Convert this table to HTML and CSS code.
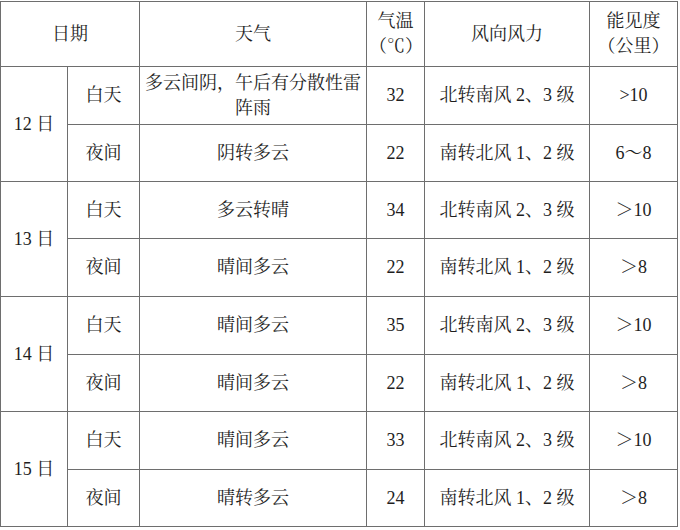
FILE: index.html
```html
<!DOCTYPE html>
<html lang="zh-CN">
<head>
<meta charset="utf-8">
<title>天气预报</title>
<link rel="stylesheet" href="styles.css">
</head>
<body>
<table class="wx">
  <colgroup>
    <col class="c-date"><col class="c-part"><col class="c-wx"><col class="c-temp"><col class="c-wind"><col class="c-vis">
  </colgroup>
  <thead>
    <tr class="head">
      <th colspan="2">日期</th>
      <th>天气</th>
      <th>气温<br>（℃）</th>
      <th>风向风力</th>
      <th>能见度<br>（公里）</th>
    </tr>
  </thead>
  <tbody>
    <tr class="r-a">
      <td rowspan="2">12 日</td>
      <td>白天</td>
      <td class="wrap">多云间阴，午后有分散性雷阵雨</td>
      <td>32</td>
      <td>北转南风 2、3 级</td>
      <td>&gt;10</td>
    </tr>
    <tr class="r-b">
      <td>夜间</td>
      <td>阴转多云</td>
      <td>22</td>
      <td>南转北风 1、2 级</td>
      <td>6～8</td>
    </tr>
    <tr class="r-b">
      <td rowspan="2">13 日</td>
      <td>白天</td>
      <td>多云转晴</td>
      <td>34</td>
      <td>北转南风 2、3 级</td>
      <td>＞10</td>
    </tr>
    <tr class="r-a">
      <td>夜间</td>
      <td>晴间多云</td>
      <td>22</td>
      <td>南转北风 1、2 级</td>
      <td>＞8</td>
    </tr>
    <tr class="r-a">
      <td rowspan="2">14 日</td>
      <td>白天</td>
      <td>晴间多云</td>
      <td>35</td>
      <td>北转南风 2、3 级</td>
      <td>＞10</td>
    </tr>
    <tr class="r-b">
      <td>夜间</td>
      <td>晴间多云</td>
      <td>22</td>
      <td>南转北风 1、2 级</td>
      <td>＞8</td>
    </tr>
    <tr class="r-a">
      <td rowspan="2">15 日</td>
      <td>白天</td>
      <td>晴间多云</td>
      <td>33</td>
      <td>北转南风 2、3 级</td>
      <td>＞10</td>
    </tr>
    <tr class="r-b">
      <td>夜间</td>
      <td>晴转多云</td>
      <td>24</td>
      <td>南转北风 1、2 级</td>
      <td>＞8</td>
    </tr>
  </tbody>
</table>
</body>
</html>
```

FILE: styles.css
```css
html, body {
  margin: 0;
  padding: 0;
  background: #ffffff;
}
body {
  padding-top: 1px;
  font-family: "Liberation Serif", "Noto Serif CJK SC", "Noto Sans CJK SC", serif;
  font-size: 18px;
  color: #1e1e1e;
}
.wx {
  border-collapse: collapse;
  table-layout: fixed;
  width: 678px;
}
.wx th, .wx td {
  border: 1px solid #6e6e6e;
  text-align: center;
  vertical-align: middle;
  padding: 0 2px;
  font-weight: normal;
  line-height: 25px;
}
.c-date { width: 67px; }
.c-part { width: 72px; }
.c-wx { width: 227px; }
.c-temp { width: 58px; }
.c-wind { width: 165px; }
.c-vis { width: 88px; }
.head { height: 65px; }
.r-a { height: 58px; }
.r-b { height: 57px; }
.wrap { padding: 0 1px; }
```
